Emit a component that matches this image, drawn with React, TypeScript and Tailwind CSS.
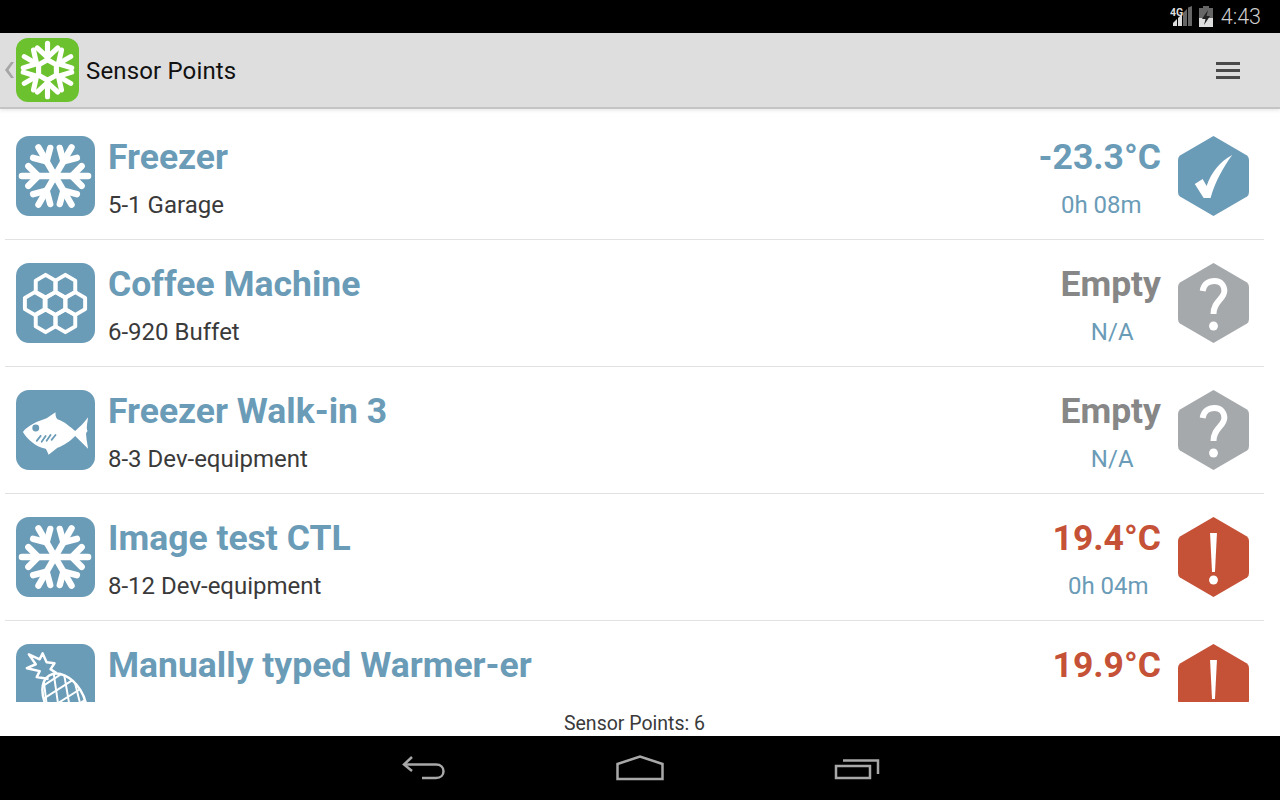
const roboto = { fontFamily: 'Roboto, sans-serif' };

type Sensor = {
  name: string;
  place?: string;
  value: string;
  valueColor: string;
  time?: string;
  icon: 'snow' | 'comb' | 'fish' | 'pine';
  status: 'ok' | 'unknown' | 'alert';
};

const sensors: Sensor[] = [
  { name: 'Freezer', place: '5-1 Garage', value: '-23.3°C', valueColor: 'text-[#6a9bb7]', time: '0h 08m', icon: 'snow', status: 'ok' },
  { name: 'Coffee Machine', place: '6-920 Buffet', value: 'Empty', valueColor: 'text-[#878787]', time: 'N/A', icon: 'comb', status: 'unknown' },
  { name: 'Freezer Walk-in 3', place: '8-3 Dev-equipment', value: 'Empty', valueColor: 'text-[#878787]', time: 'N/A', icon: 'fish', status: 'unknown' },
  { name: 'Image test CTL', place: '8-12 Dev-equipment', value: '19.4°C', valueColor: 'text-[#c55137]', time: '0h 04m', icon: 'snow', status: 'alert' },
  { name: 'Manually typed Warmer-er', value: '19.9°C', valueColor: 'text-[#c55137]', icon: 'pine', status: 'alert' },
];

const angles = [0, 60, 120, 180, 240, 300];

function Snowflake() {
  return (
    <g stroke="white" strokeWidth="6.500" strokeLinecap="round" strokeLinejoin="round" fill="none">
      {angles.map((a) => (
        <g key={a} transform={`rotate(${a + 90} 39.500 40)`}>
          <path d="M39.500 40V6.500" />
          <path d="M29.500 13L39.500 23L49.500 13" />
        </g>
      ))}
    </g>
  );
}

function LogoFlake() {
  return (
    <g stroke="white" strokeWidth="6.500" strokeLinecap="round" strokeLinejoin="round" fill="none">
      <path d="M40 27L51.300 33.500V46.500L40 53L28.700 46.500V33.500Z" />
      {angles.map((a) => (
        <g key={a} transform={`rotate(${a} 40 40)`}>
          <path d="M40 27V6" />
          <path d="M27 12L40 24L53 12" />
        </g>
      ))}
    </g>
  );
}

function Comb() {
  const cells = [
    [30, 23], [50, 23], [19, 40.500], [40, 40.500], [60, 40.500], [30, 58], [50, 58],
  ];
  return (
    <g stroke="white" strokeWidth="4" fill="none" strokeLinejoin="round">
      {cells.map(([x, y]) => (
        <path key={`${x}-${y}`} d={`M${x} ${y - 11.5}L${x + 10} ${y - 5.7}V${y + 5.7}L${x} ${y + 11.5}L${x - 10} ${y + 5.7}V${y - 5.7}Z`} />
      ))}
    </g>
  );
}

function Fish() {
  return (
    <g>
      <path
        fill="white"
        d="M7 42C12 35 22 31 31 28C34 26 37 24 40 22C40 25 40 27 42 29C49 31 55 37 60 41C64 37 69 33 73 27C72 35 71 38 72.500 41L71 43C71 48 72 52 73 59C68 54 64 50 60 46C55 51 48 56 42 58L33 65C32 63 31 60 30 59C20 57 12 50 7 42Z"
      />
      <circle cx="20" cy="38" r="3.500" fill="#6a9bb7" />
      <g stroke="#6a9bb7" strokeWidth="1.800" strokeLinecap="round">
        <path d="M21 51L25 46" />
        <path d="M26 52L30 46" />
        <path d="M31 51L35 45" />
        <path d="M36 50L40 45" />
      </g>
    </g>
  );
}

function Pineapple() {
  return (
    <g fill="none" stroke="white" strokeLinejoin="round">
      <path strokeWidth="2.500" d="M33 35L21 33L24 27L11 24L20 20L13 10L24 15L27 9L31 18L39 19L35 25L41 29" />
      <clipPath id="pine-body">
        <ellipse cx="49" cy="56" rx="19" ry="29" transform="rotate(-32 49 56)" />
      </clipPath>
      <ellipse strokeWidth="2.500" cx="49" cy="56" rx="19" ry="29" transform="rotate(-32 49 56)" />
      <g strokeWidth="2" clipPath="url(#pine-body)">
        <path d="M24 44L52 26M26 56L62 33M32 66L70 42M40 76L76 52" />
        <path d="M38 28L46 84M48 26L58 84M58 32L70 80M28 36L34 84" />
      </g>
    </g>
  );
}

function SensorIcon({ icon }: { icon: Sensor['icon'] }) {
  return (
    <div className="w-[79px] h-[80px] shrink-0 rounded-[13px] bg-[#6a9bb7] overflow-hidden">
      <svg width="79" height="80" viewBox="0 0 80 80">
        {icon === 'snow' && <Snowflake />}
        {icon === 'comb' && <Comb />}
        {icon === 'fish' && <Fish />}
        {icon === 'pine' && <Pineapple />}
      </svg>
    </div>
  );
}

function StatusHex({ status }: { status: Sensor['status'] }) {
  const color = status === 'ok' ? '#6a9bb7' : status === 'alert' ? '#c55137' : '#a5a9ac';
  return (
    <svg width="71" height="80" viewBox="0 0 72 80" preserveAspectRatio="none" className="shrink-0">
      <path
        d="M36 0L70 19.500Q72 21 72 24V56Q72 59 70 60.500L36 80L2 60.500Q0 59 0 56V24Q0 21 2 19.500Z"
        fill={color}
      />
      {status === 'ok' && (
        <path fill="white" d="M17 48L25 43L29 50C34 36 42 26 55 19C46 31 38 45 33 62H26Z" />
      )}
      {status === 'unknown' && (
        <>
          <path
            d="M25 28C26 21 31 18 37 18C44 18 47 23 47 28C47 36 36 38 36 51"
            fill="none"
            stroke="white"
            strokeWidth="6"
          />
          <circle cx="36" cy="63" r="4.500" fill="white" />
        </>
      )}
      {status === 'alert' && (
        <>
          <path fill="white" d="M32.500 16H39.500L37.500 55H34.500Z" />
          <circle cx="36" cy="63" r="4.500" fill="white" />
        </>
      )}
    </svg>
  );
}

function SensorRow({ sensor }: { sensor: Sensor }) {
  return (
    <div className="h-[127px] shrink-0 mx-[5px] w-[1259px] flex items-start gap-[13px] pl-[11px] pt-[23px] pr-[15px] border-b border-[#e2e2e2]">
      <SensorIcon icon={sensor.icon} />
      <div className="flex-1 min-w-0">
        <div className="text-[35.500px] leading-[42px] h-[42px] font-bold text-[#6a9bb7]">{sensor.name}</div>
        {sensor.place && <div className="text-[24px] leading-[28px] mt-[13px] text-[#3a3a3a]">{sensor.place}</div>}
      </div>
      <div className="flex flex-col items-center mr-[4px]">
        <div className={`text-[35.500px] leading-[42px] h-[42px] font-bold ${sensor.valueColor}`}>{sensor.value}</div>
        {sensor.time && (
          <div className="text-[24px] leading-[28px] mt-[13px] pl-[3px] text-[#6a9bb7]">{sensor.time}</div>
        )}
      </div>
      <StatusHex status={sensor.status} />
    </div>
  );
}

export default function App() {
  return (
    <div className="w-[1280px] h-[800px] flex flex-col bg-white overflow-hidden" style={roboto}>
      <div className="h-[33px] shrink-0 bg-black flex items-center justify-end gap-[6px] pr-[19px]">
        <svg width="23" height="21" viewBox="0 0 23 21">
          <path d="M18 1.500L22 0V20H18Z" fill="#666" />
          <path d="M13 7L17 3V20H13Z" fill="#666" />
          <path d="M8 12L12 8V20H8Z" fill="#ddd" />
          <path d="M3 17L7 13V20H3Z" fill="#ddd" />
          <text x="0" y="10" fill="#ddd" fontSize="10.500" fontWeight="700">4G</text>
        </svg>
        <svg width="14" height="21" viewBox="0 0 14 21">
          <path d="M4 0H10V2H14V21H0V2H4Z" fill="#666" />
          <path d="M0 12H14V21H0Z" fill="#ddd" />
          <path d="M9 4L3 13H6.500L5 19L11 10H7.500Z" fill="#222" />
        </svg>
        <span className="ml-[2px] text-[21.500px] leading-none text-[#cfcfcf] font-light">4:43</span>
      </div>

      <div className="relative z-10 h-[76px] shrink-0 bg-[#dedede] border-b-2 border-[#c4c4c4] shadow-[0_2px_3px_rgba(0,0,0,0.08)] flex items-center">
        <svg width="16" height="22" viewBox="0 0 16 22" className="shrink-0">
          <path d="M12 3L6 11L12 19H15L9.500 11L15 3Z" fill="#a6a6a6" transform="translate(-1 0)" />
        </svg>
        <div className="w-[63px] h-[64px] rounded-[12px] bg-[#6cc22e] shrink-0">
          <svg width="63" height="64" viewBox="0 0 80 80">
            <LogoFlake />
          </svg>
        </div>
        <span className="ml-[7px] text-[24px] tracking-[0.15px] text-[#111] mt-[2px]">Sensor Points</span>
        <div className="ml-auto mr-[40px] w-[24px] flex flex-col gap-[4px]">
          <div className="h-[3px] bg-[#4a4a4a]" />
          <div className="h-[3px] bg-[#4a4a4a]" />
          <div className="h-[3px] bg-[#4a4a4a]" />
        </div>
      </div>

      <div className="h-[593px] shrink-0 pt-[4px] overflow-hidden flex flex-col">
        {sensors.map((s) => (
          <SensorRow key={s.name} sensor={s} />
        ))}
      </div>

      <div className="h-[34px] shrink-0 flex items-center justify-center text-[19.500px] text-[#3a3a3a] pt-[10px] pr-[11px]">
        Sensor Points: 6
      </div>

      <div className="flex-1 bg-black flex items-center justify-center gap-[170px]">
        <svg width="44" height="26" viewBox="0 0 44 26" fill="none" stroke="#a8a8a8" strokeWidth="2.500" className="ml-[2px]">
          <path d="M10 2L2 9.500L10 16" />
          <path d="M2 9.500H34C44 9.500 44 23 34 23H20" />
        </svg>
        <svg width="48" height="26" viewBox="0 0 48 26" fill="none" stroke="#a8a8a8" strokeWidth="2.500">
          <path d="M1.500 9L24 1.500L46.500 9V24H1.500Z" />
        </svg>
        <svg width="46" height="24" viewBox="0 0 46 24" fill="none" stroke="#a8a8a8" strokeWidth="2.500">
          <path d="M2 10H36V22H2Z" />
          <path d="M9 4.500H44V18" />
        </svg>
      </div>
    </div>
  );
}
